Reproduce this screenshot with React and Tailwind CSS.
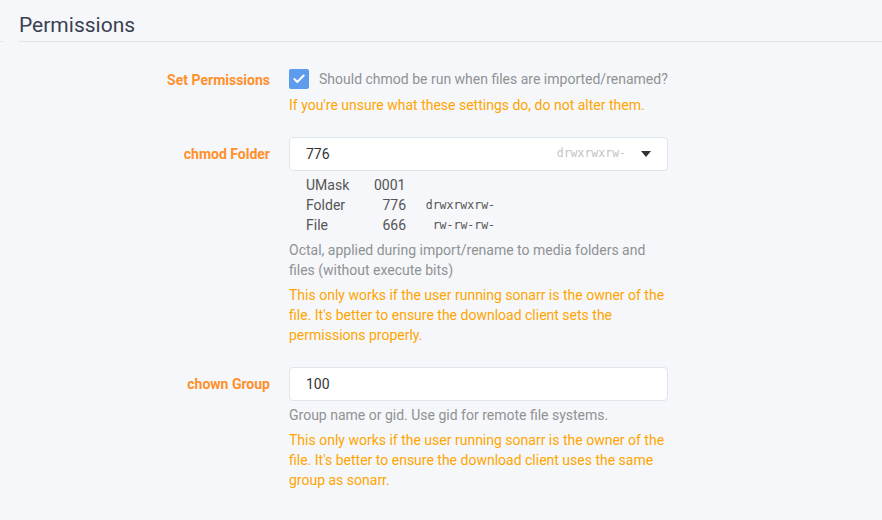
import { Check } from "lucide-react";

const Label = ({ children }) => (
  <div className="w-[250px] shrink-0 mr-[19px] text-right font-bold text-[#ff902b] leading-[35px]">
    {children}
  </div>
);

const Help = ({ children, className = "" }) => (
  <div className={`text-[#909293] leading-[20px] ${className}`}>{children}</div>
);

const Warning = ({ children, className = "" }) => (
  <div className={`text-[#ffa500] leading-[20px] ${className}`}>{children}</div>
);

const mono = { fontFamily: '"DejaVu Sans Mono", "Liberation Mono", monospace' };

const App = () => {
  return (
    <div
      className="w-[882px] h-[520px] bg-[#f5f7fa] text-[14px] overflow-hidden"
      style={{ fontFamily: "Roboto, 'Liberation Sans', sans-serif" }}
    >
      <div className="flex items-end">
        <div className="w-[3px] border-b border-[#e5e5e5]" />
        <div className="ml-[16px] flex-1 pt-[10px] border-b border-[#e5e5e5] text-[21px] leading-[31px] text-[#3a3f51]">
          Permissions
        </div>
      </div>

      <div className="pl-[20px] pt-[21px]">
        {/* Set Permissions */}
        <div className="flex mb-[22px]">
          <Label>Set Permissions</Label>
          <div className="w-[379px]">
            <div className="h-[32px] flex items-center">
              <div className="w-[20px] h-[20px] rounded-[2px] bg-[#5d9cec] flex items-center justify-center">
                <Check size={14} strokeWidth={3.5} color="#fff" />
              </div>
              <span className="ml-[10px] text-[#909293]">
                Should chmod be run when files are imported/renamed?
              </span>
            </div>
            <Warning>If you're unsure what these settings do, do not alter them.</Warning>
          </div>
        </div>

        {/* chmod Folder */}
        <div className="flex mb-[22px]">
          <Label>chmod Folder</Label>
          <div className="w-[379px]">
            <div className="h-[34px] bg-white border border-[#dde6e9] rounded-[4px] flex items-center pl-[16px] pr-[16px]">
              <span className="flex-1 text-[#333]">776</span>
              <span className="text-[11.5px] text-[#c4c4c4]" style={mono}>
                drwxrwxrw-
              </span>
              <svg width="10" height="6" viewBox="0 0 10 6" className="ml-[15px]">
                <path d="M0 0 L10 0 L5 6 Z" fill="#333" />
              </svg>
            </div>
            <div className="mt-[4px] pl-[17px] text-[#555] leading-[20px]">
              <div className="flex">
                <span className="w-[68px]">UMask</span>
                <span>0001</span>
              </div>
              <div className="flex">
                <span className="w-[68px]">Folder</span>
                <span className="w-[32px] text-right">776</span>
                <span className="w-[89px] text-right text-[11.5px]" style={mono}>
                  drwxrwxrw-
                </span>
              </div>
              <div className="flex">
                <span className="w-[68px]">File</span>
                <span className="w-[32px] text-right">666</span>
                <span className="w-[89px] text-right text-[11.5px]" style={mono}>
                  rw-rw-rw-
                </span>
              </div>
            </div>
            <Help className="mt-[5px]">
              Octal, applied during import/rename to media folders and files (without execute bits)
            </Help>
            <Warning className="mt-[5px]">
              This only works if the user running sonarr is the owner of the file. It's better to
              ensure the download client sets the permissions properly.
            </Warning>
          </div>
        </div>

        {/* chown Group */}
        <div className="flex">
          <Label>chown Group</Label>
          <div className="w-[379px]">
            <div className="h-[34px] bg-white border border-[#dde6e9] rounded-[4px] flex items-center px-[16px] text-[#333]">
              100
            </div>
            <Help className="mt-[4px]">Group name or gid. Use gid for remote file systems.</Help>
            <Warning className="mt-[5px]">
              This only works if the user running sonarr is the owner of the file. It's better to
              ensure the download client uses the same group as sonarr.
            </Warning>
          </div>
        </div>
      </div>
    </div>
  );
};

export default App;
